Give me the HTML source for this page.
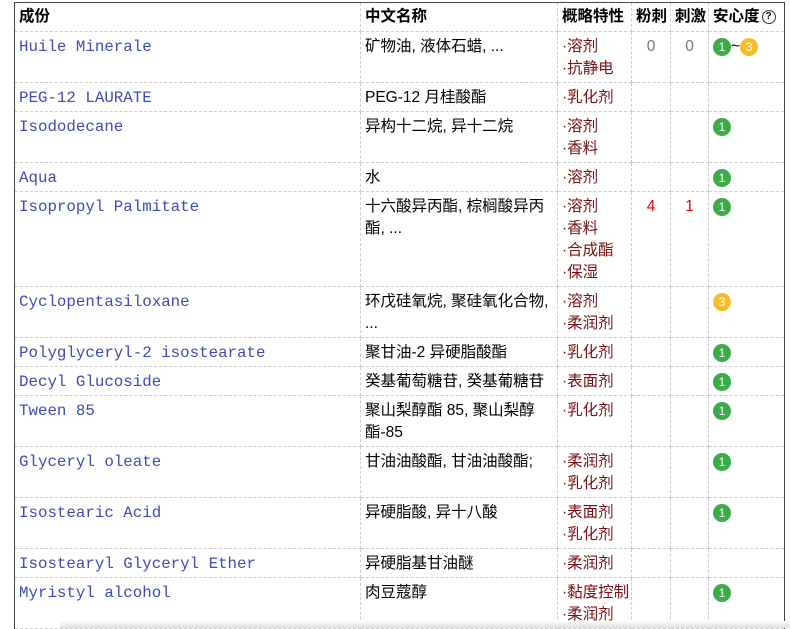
<!DOCTYPE html><html><head><meta charset="utf-8"><style>
body{margin:0;background:#fff;width:790px;height:628px;overflow:hidden;position:relative;font-family:"Liberation Sans","Noto Sans CJK SC",sans-serif;font-size:15.5px;color:#000}
table{position:absolute;left:14px;top:2px;border-collapse:collapse;table-layout:fixed;width:770px;border:1px solid #444;border-bottom:none}
td,th{border:1px dashed #ccc;padding:4px 4px 2px;line-height:22px;height:22px;vertical-align:top;text-align:left;white-space:nowrap;overflow:hidden}
th{font-weight:bold;padding:3px 4px 3px;line-height:22px}
tr:first-child th{border-top:none}
td:first-child,th:first-child{border-left:none}
td:last-child,th:last-child{border-right:none}
.n{font-family:"Liberation Mono",monospace;color:#3a4cb8;font-size:15.8px}
.p{color:#7a1010}
.c{text-align:center;color:#777}
.r{text-align:center;color:#e00}
.b{display:inline-block;width:18px;height:18px;border-radius:50%;color:#fff;font-size:12px;line-height:18px;text-align:center;vertical-align:top;margin-top:2px}
.g{background:#3cab4a}.o{background:#f6bd2a}
.q{display:inline-block;width:12px;height:12px;border:1px solid #333;border-radius:50%;font-size:10px;line-height:12px;text-align:center;font-weight:bold;vertical-align:middle;margin-left:2px}
.sh{position:absolute;left:60px;top:621px;width:730px;height:7px;background:linear-gradient(#fff,#ddd)}
</style></head><body>
<table>
<colgroup><col style="width:346px"><col style="width:197px"><col style="width:74px"><col style="width:39px"><col style="width:38px"><col style="width:76px"></colgroup>
<tr><th>成份</th><th>中文名称</th><th>概略特性</th><th>粉刺</th><th>刺激</th><th>安心度<span class="q">?</span></th></tr>
<tr><td class="n">Huile Minerale</td><td>矿物油, 液体石蜡, ...</td><td class="p">·溶剂<br>·抗静电</td><td class="c">0</td><td class="c">0</td><td><span class="b g">1</span>~<span class="b o">3</span></td></tr>
<tr><td class="n">PEG-12 LAURATE</td><td>PEG-12 月桂酸酯</td><td class="p">·乳化剂</td><td></td><td></td><td></td></tr>
<tr><td class="n">Isododecane</td><td>异构十二烷, 异十二烷</td><td class="p">·溶剂<br>·香料</td><td></td><td></td><td><span class="b g">1</span></td></tr>
<tr><td class="n">Aqua</td><td>水</td><td class="p">·溶剂</td><td></td><td></td><td><span class="b g">1</span></td></tr>
<tr><td class="n">Isopropyl Palmitate</td><td>十六酸异丙酯, 棕榈酸异丙<br>酯, ...</td><td class="p">·溶剂<br>·香料<br>·合成酯<br>·保湿</td><td class="r">4</td><td class="r">1</td><td><span class="b g">1</span></td></tr>
<tr><td class="n">Cyclopentasiloxane</td><td>环戊硅氧烷, 聚硅氧化合物,<br>...</td><td class="p">·溶剂<br>·柔润剂</td><td></td><td></td><td><span class="b o">3</span></td></tr>
<tr><td class="n">Polyglyceryl-2 isostearate</td><td>聚甘油-2 异硬脂酸酯</td><td class="p">·乳化剂</td><td></td><td></td><td><span class="b g">1</span></td></tr>
<tr><td class="n">Decyl Glucoside</td><td>癸基葡萄糖苷, 癸基葡糖苷</td><td class="p">·表面剂</td><td></td><td></td><td><span class="b g">1</span></td></tr>
<tr><td class="n">Tween 85</td><td>聚山梨醇酯 85, 聚山梨醇<br>酯-85</td><td class="p">·乳化剂</td><td></td><td></td><td><span class="b g">1</span></td></tr>
<tr><td class="n">Glyceryl oleate</td><td>甘油油酸酯, 甘油油酸酯;</td><td class="p">·柔润剂<br>·乳化剂</td><td></td><td></td><td><span class="b g">1</span></td></tr>
<tr><td class="n">Isostearic Acid</td><td>异硬脂酸, 异十八酸</td><td class="p">·表面剂<br>·乳化剂</td><td></td><td></td><td><span class="b g">1</span></td></tr>
<tr><td class="n">Isostearyl Glyceryl Ether</td><td>异硬脂基甘油醚</td><td class="p">·柔润剂</td><td></td><td></td><td></td></tr>
<tr><td class="n">Myristyl alcohol</td><td>肉豆蔻醇</td><td class="p">·黏度控制<br>·柔润剂</td><td></td><td></td><td><span class="b g">1</span></td></tr>
</table>
<div class="sh"></div>
</body></html>
